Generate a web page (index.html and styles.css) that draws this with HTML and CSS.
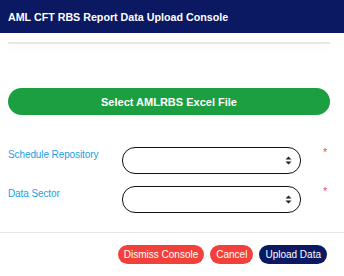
FILE: index.html
```html
<!DOCTYPE html>
<html>
<head>
<meta charset="utf-8">
<link rel="stylesheet" href="styles.css">
</head>
<body>
<div class="modal">
  <header class="modal-header">
    <h1 class="title">AML CFT RBS Report Data Upload Console</h1>
  </header>
  <div class="modal-body">
    <div class="progress"></div>
    <button class="btn-file">Select AMLRBS Excel File</button>
    <div class="form-row first">
      <label class="label">Schedule Repository</label>
      <div class="select-wrap">
        <select class="select"></select>
        <svg class="arrows" width="7" height="9" viewBox="0 0 7 9"><path d="M3.5 0.5 L6.5 3.5 L0.5 3.5 Z M3.5 8.5 L6.5 5.5 L0.5 5.5 Z" fill="#222"/></svg>
      </div>
      <span class="req">*</span>
    </div>
    <div class="form-row">
      <label class="label">Data Sector</label>
      <div class="select-wrap">
        <select class="select"></select>
        <svg class="arrows" width="7" height="9" viewBox="0 0 7 9"><path d="M3.5 0.5 L6.5 3.5 L0.5 3.5 Z M3.5 8.5 L6.5 5.5 L0.5 5.5 Z" fill="#222"/></svg>
      </div>
      <span class="req">*</span>
    </div>
  </div>
  <footer class="modal-footer">
    <button class="btn btn-red">Dismiss Console</button>
    <button class="btn btn-red">Cancel</button>
    <button class="btn btn-navy">Upload Data</button>
  </footer>
</div>
</body>
</html>
```
FILE: styles.css
```css
* { box-sizing: border-box; }
html, body { margin: 0; padding: 0; background: #fff; }
body { font-family: "Liberation Sans", Arial, sans-serif; width: 344px; height: 276px; overflow: hidden; }
.modal-header {
  height: 33px;
  background: #0b1862;
  display: flex;
  align-items: center;
  padding-left: 8px;
}
.title { margin: 0; color: #fff; font-size: 10.7px; font-weight: bold; }
.modal-body { padding: 9px 14px 0 8px; }
.progress {
  height: 2px;
  background: #e8e8e8;
  box-shadow: 0 3px 8px rgba(0,0,0,0.07);
}
.btn-file {
  display: block;
  width: 322px;
  height: 27px;
  margin-top: 44px;
  border: none;
  border-radius: 14px;
  background: #1b9f40;
  color: #fff;
  font-family: inherit;
  font-size: 11px;
  font-weight: bold;
  padding: 0;
}
.form-row {
  display: grid;
  grid-template-columns: 114px 179px 1fr;
  margin-top: 12px;
}
.form-row.first { margin-top: 32px; }
.label {
  color: #1a9fe3;
  font-size: 10px;
  padding-top: 2px;
  line-height: 12px;
  letter-spacing: -0.1px;
}
.select-wrap { position: relative; height: 27px; }
.select {
  appearance: none;
  -webkit-appearance: none;
  width: 179px;
  height: 27px;
  border: 1px solid #111;
  border-radius: 13px;
  background: #fff;
  display: block;
}
.arrows { position: absolute; right: 9px; top: 9px; }
.req {
  color: #f05050;
  font-size: 11px;
  line-height: 10px;
  padding-left: 22px;
}
.modal-footer {
  margin-top: 19px;
  border-top: 1px solid #e6e6e6;
  padding: 12px 17px 0 0;
  display: flex;
  justify-content: flex-end;
  gap: 6px;
}
.btn {
  height: 19px;
  border: none;
  border-radius: 10px;
  color: #fff;
  font-family: inherit;
  font-size: 10px;
  padding: 0 6px;
}
.btn-red { background: #f4403a; }
.btn-navy { background: #0b1862; }
```
